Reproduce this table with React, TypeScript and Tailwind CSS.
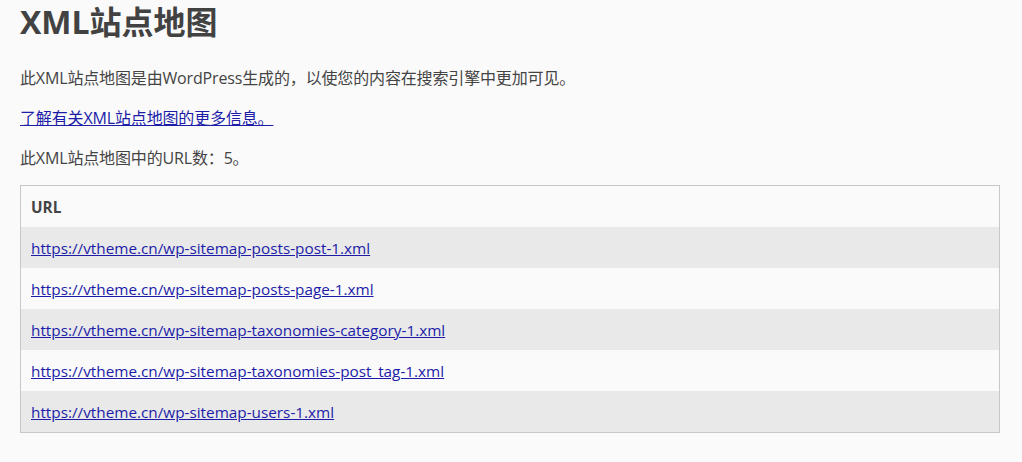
import React from "react";

const urls = [
  "https://vtheme.cn/wp-sitemap-posts-post-1.xml",
  "https://vtheme.cn/wp-sitemap-posts-page-1.xml",
  "https://vtheme.cn/wp-sitemap-taxonomies-category-1.xml",
  "https://vtheme.cn/wp-sitemap-taxonomies-post_tag-1.xml",
  "https://vtheme.cn/wp-sitemap-users-1.xml",
];

export default function App() {
  return (
    <div
      className="min-h-[462px] w-full bg-[#fafafa] text-[#444] overflow-hidden"
      style={{ fontFamily: '"Open Sans", "Noto Sans CJK SC", sans-serif' }}
    >
      <div className="ml-[20px] w-[980px]">
        <h1 className="m-0 pt-[2px] text-[32px] leading-[40px] font-bold text-[#424242] mb-[24px]">
          XML站点地图
        </h1>
        <p className="text-[16px] leading-[24px] mb-[16px] tracking-[-0.15px]">
          此XML站点地图是由WordPress生成的，以使您的内容在搜索引擎中更加可见。
        </p>
        <p className="text-[16px] leading-[24px] mb-[16px] tracking-[-0.15px]">
          <a href="#" className="text-[#1c1ca8] underline">
            了解有关XML站点地图的更多信息。
          </a>
        </p>
        <p className="text-[16px] leading-[24px] mb-[15px] tracking-[-0.15px]">此XML站点地图中的URL数：5。</p>
        <table className="w-full border border-[#c8c8c8] border-collapse text-[15.3px]">
          <thead>
            <tr>
              <th className="text-left px-[10px] pt-[11px] pb-[9px] leading-[21px] font-bold">URL</th>
            </tr>
          </thead>
          <tbody>
            {urls.map((u, i) => (
              <tr key={u} className={i % 2 === 0 ? "bg-[#e9e9e9]" : ""}>
                <td className="px-[10px] pt-[11px] pb-[9px] leading-[21px]">
                  <a href="#" className="text-[#1c1ca8] underline">
                    {u}
                  </a>
                </td>
              </tr>
            ))}
          </tbody>
        </table>
      </div>
    </div>
  );
}
